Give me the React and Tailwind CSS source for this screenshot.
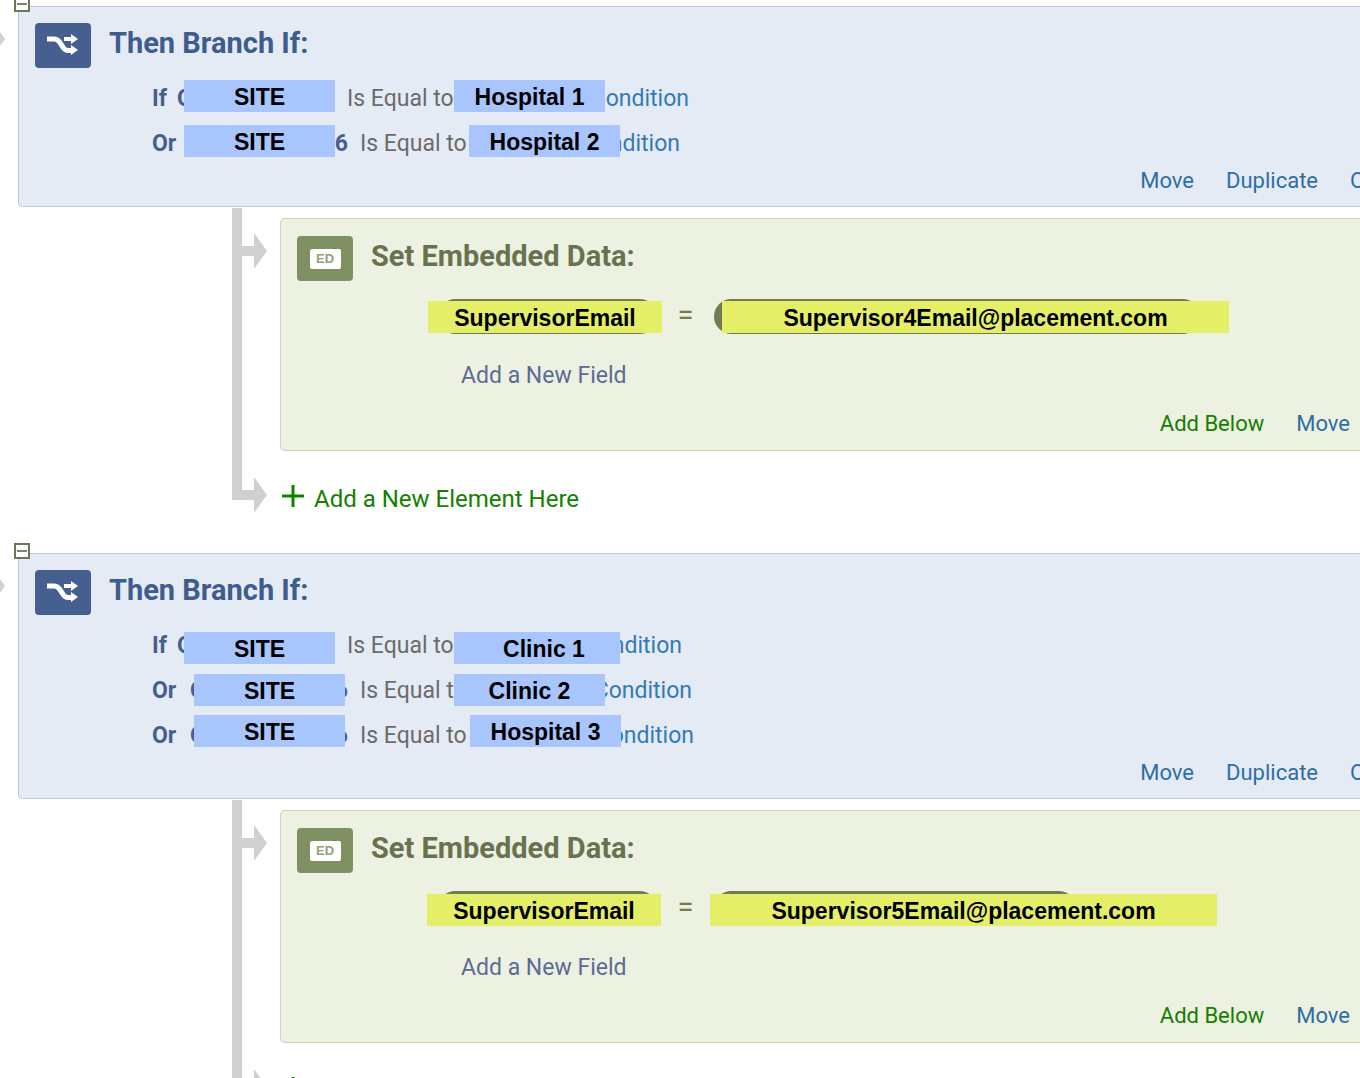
import { clsx } from 'clsx';

const BLOCKS = [
  {
    conditions: [
      { joiner: 'If', field: 'SITE', value: 'Hospital 1', fieldPos: 'left-[32px] top-[4px]', valuePos: 'left-[302px] top-[4px] w-[151px]', linkWidth: 'w-[234px]' },
      { joiner: 'Or', field: 'SITE', value: 'Hospital 2', fieldPos: 'left-[32px] top-[4px]', valuePos: 'left-[317px] top-[4px] w-[151px]', linkWidth: 'w-[212px]' },
    ],
    data: {
      name: 'SupervisorEmail',
      value: 'Supervisor4Email@placement.com',
      namePos: '-left-[10px] top-[2px]',
      valuePos: 'left-[8px] top-[2px]',
      valueWidth: 'w-[486px]',
    },
  },
  {
    conditions: [
      { joiner: 'If', field: 'SITE', value: 'Clinic 1', fieldPos: 'left-[32px] top-[9px]', valuePos: 'left-[302px] top-[9px] w-[166px] pl-[14px]', linkWidth: 'w-[227px]' },
      { joiner: 'Or', field: 'SITE', value: 'Clinic 2', fieldPos: 'left-[42px] top-[6px]', valuePos: 'left-[302px] top-[6px] w-[151px]', linkWidth: 'w-[224px]' },
      { joiner: 'Or', field: 'SITE', value: 'Hospital 3', fieldPos: 'left-[42px] top-[2px]', valuePos: 'left-[318px] top-[2px] w-[151px]', linkWidth: 'w-[226px]' },
    ],
    data: {
      name: 'SupervisorEmail',
      value: 'Supervisor5Email@placement.com',
      namePos: '-left-[11px] top-[3px]',
      valuePos: '-left-[4px] top-[3px]',
      valueWidth: 'w-[362px]',
    },
  },
];

const Label = ({ className, children }) => (
  <span
    className={clsx(
      "absolute z-10 flex h-8 items-center justify-center pt-[2px] whitespace-nowrap font-['Liberation_Sans',Arial,sans-serif] text-[23px] leading-8 font-bold text-black",
      className
    )}
  >
    {children}
  </span>
);

const BranchIcon = () => (
  <span className="flex h-[45px] w-14 shrink-0 justify-center rounded bg-[#45608f] pt-[10px]">
    <svg width="32" height="24" viewBox="0 0 32 24" fill="none" stroke="white" strokeWidth="5">
      <path d="M0 6h7c2.500 0 4 1 5.500 3l4 6c1.500 2 3 2.500 5 2.500h4" />
      <path d="M17 6h8" strokeWidth="4" />
      <path d="M24 1l7 5-7 5zM24 12l7 5-7 5z" fill="white" stroke="none" />
    </svg>
  </span>
);

const DataIcon = () => (
  <span className="flex h-[45px] w-14 shrink-0 items-center justify-center rounded bg-[#7f9163]">
    <span className="flex h-5 w-[31px] items-center justify-center rounded-xs bg-white font-['Liberation_Sans',Arial,sans-serif] text-[13px] font-bold text-[#93a17c]">
      ED
    </span>
  </span>
);

const Arrow = ({ className }) => (
  <svg className={clsx('shrink-0', className)} width="25" height="36" viewBox="0 0 25 36" fill="#d0d0d0">
    <path d="M0 13h12V0l13 18-13 18V23H0z" />
  </svg>
);

const Condition = ({ joiner, field, value, fieldPos, valuePos, linkWidth }) => (
  <li className="relative flex h-[45px] items-center whitespace-nowrap">
    <span className={clsx('shrink-0 font-bold text-[#45608f]', joiner === 'If' ? 'w-[25px]' : 'w-[38px]')}>{joiner}</span>
    <span className="flex w-[158px] shrink-0 justify-between font-bold text-[#45608f]">
      <span>Q</span>
      <span>6</span>
    </span>
    <span className="ml-3 w-[108px] shrink-0 text-[#6b6b6b]">Is Equal to</span>
    <a href="#condition" className={clsx('shrink-0 text-right text-[#337ab7]', linkWidth)}>Condition</a>
    <Label className={clsx('w-[151px] bg-[#a8c5fe]', fieldPos)}>{field}</Label>
    <Label className={clsx('bg-[#a8c5fe]', valuePos)}>{value}</Label>
  </li>
);

const BranchPanel = ({ conditions }) => (
  <section className="relative ml-[18px] rounded-l-[5px] border border-r-0 border-[#bcc6dc] bg-[#e5ebf5] pt-4 pb-[11px] pl-4">
    <button
      type="button"
      aria-label="Collapse branch"
      className="absolute -top-[11px] -left-[5px] flex size-4 items-center justify-center border-2 border-[#6d7654] bg-white"
    >
      <span className="h-[2px] w-[10px] bg-[#7d8566]" />
    </button>
    <Arrow className="absolute top-[14px] -left-[39px]" />

    <div className="flex h-[45px]">
      <BranchIcon />
      <h2 className="ml-[18px] text-[29px] leading-10 font-bold text-[#3f5c8f]">Then Branch If:</h2>
    </div>
    <ul className="mt-2 ml-[117px]">
      {conditions.map((condition, i) => (
        <Condition key={i} {...condition} />
      ))}
    </ul>
    <div className="flex h-[29px] items-center justify-end text-[22px] whitespace-nowrap text-[#2f6ea5]">
      <a href="#move">Move</a>
      <a href="#duplicate" className="ml-8">Duplicate</a>
      <a href="#options" className="ml-8 w-[10px]">Options</a>
    </div>
  </section>
);

const DataPanel = ({ name, value, namePos, valuePos, valueWidth }) => (
  <section className="mt-[10px] min-w-0 flex-1 rounded-l-[5px] border border-r-0 border-[#cdd6b4] bg-[#edf1e1] pt-[17px] pb-[10px] pl-4">
    <div className="flex h-[45px]">
      <DataIcon />
      <h2 className="ml-[18px] text-[29px] leading-10 font-bold text-[#67734f]">Set Embedded Data:</h2>
    </div>
    <div className="mt-[18px] ml-[141px] flex h-[35px]">
      <div className="relative w-[219px] shrink-0 rounded-full bg-[#707b52]">
        <Label className={clsx('w-[234px] bg-[#e4ee66]', namePos)}>{name}</Label>
      </div>
      <span className="w-[57px] shrink-0 text-center text-[29px] leading-8 text-[#707b52]">=</span>
      <div className={clsx('relative shrink-0 rounded-full bg-[#707b52]', valueWidth)}>
        <Label className={clsx('w-[507px] bg-[#e4ee66]', valuePos)}>{value}</Label>
      </div>
    </div>
    <a href="#add-field" className="mt-6 ml-[164px] block leading-9 text-[#5a6c95]">Add a New Field</a>
    <div className="mt-[14px] flex h-8 items-center justify-end gap-8 pr-[10px] text-[22px] whitespace-nowrap text-[#2f6ea5]">
      <a href="#add-below" className="text-[#138000]">Add Below</a>
      <a href="#move-data">Move</a>
    </div>
  </section>
);

const AddElement = () => (
  <button type="button" className="mt-7 flex h-10 items-center text-[24px] whitespace-nowrap text-[#138000]">
    <svg className="mb-[6px] ml-[2px]" width="22" height="22" viewBox="0 0 22 22" stroke="currentColor" strokeWidth="3">
      <path d="M11 0v22M0 11h22" />
    </svg>
    <span className="ml-[10px]">Add a New Element Here</span>
  </button>
);

const App = () => (
  <main className="h-screen overflow-hidden bg-white pt-[6px] font-[Roboto,sans-serif] text-[23px] leading-8">
    {BLOCKS.map(({ conditions, data }, i) => (
      <div key={i}>
        <BranchPanel conditions={conditions} />
        <div className="mt-px pl-[232px]">
          <div className="flex">
            <div className="flex w-12 shrink-0">
              <div className="w-[10px] bg-[#d0d0d0]" />
              <Arrow className="mt-[25px]" />
            </div>
            <DataPanel {...data} />
          </div>
          <div className="flex h-[102px]">
            <div className="flex w-12 shrink-0">
              <div className="h-[49px] w-[10px] bg-[#d0d0d0]" />
              <Arrow className="mt-[26px]" />
            </div>
            <AddElement />
          </div>
        </div>
      </div>
    ))}
  </main>
);

export default App;
